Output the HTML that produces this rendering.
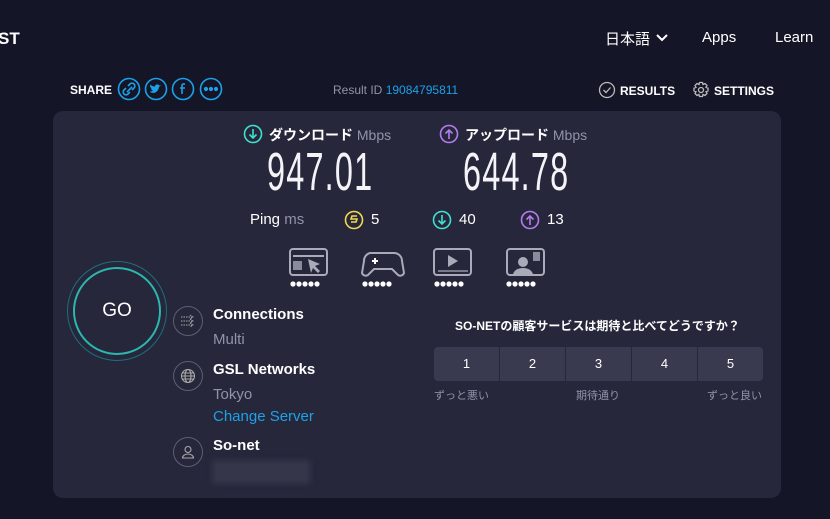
<!DOCTYPE html>
<html><head><meta charset="utf-8"><style>
*{margin:0;padding:0;box-sizing:border-box}
body{width:830px;height:519px;background:#141527;font-family:"Liberation Sans","Noto Sans CJK JP",sans-serif;color:#fff;position:relative;overflow:hidden}
.a{position:absolute;white-space:nowrap}
.card{position:absolute;left:53px;top:111px;width:728px;height:387px;background:#26273b;border-radius:10px}
.num{position:absolute;font-size:54px;font-weight:300;transform:scaleX(.6);transform-origin:left top;letter-spacing:2px;color:#f4f4f8;top:141px}
.gray{color:#9193a8}
.ico{position:absolute;border:1.5px solid #5d5f73;border-radius:50%;width:30px;height:30px}
.rate{position:absolute;top:347px;left:434px;width:329px;height:34px;display:flex;border-radius:4px;overflow:hidden}
.rate div{flex:1;background:#393a4f;margin-right:1px;text-align:center;line-height:34px;font-size:13px}
.rate div:last-child{margin-right:0}
</style></head><body>
<div class="a" style="left:-2px;top:29px;font-size:17px;font-weight:bold">ST</div>
<div class="a" style="left:605px;top:28px;font-size:15px">日本語</div>
<svg class="a" style="left:656px;top:34px" width="12" height="8"><path d="M1 1l5 5 5-5" stroke="#fff" stroke-width="2" fill="none"/></svg>
<div class="a" style="left:702px;top:29px;font-size:15px">Apps</div>
<div class="a" style="left:775px;top:29px;font-size:15px">Learn</div>
<div class="a" style="left:70px;top:83px;font-size:12px;font-weight:bold">SHARE</div>
<svg class="a" style="left:117px;top:77px" width="108" height="26" fill="none" stroke="#1da1e8" stroke-width="1.6">
<circle cx="12" cy="12" r="10.5"/><path d="M10 15l5-5M9 11l-2 2a2.5 2.5 0 0 0 4 4l2-2M15 13l2-2a2.5 2.5 0 0 0-4-4l-2 2"/>
<circle cx="39" cy="12" r="10.5"/><path d="M33 15c3 2 8 1 9-5l2-2-2 .5c-1-2-4-1-4 1-2 0-4-1-5-2 0 2 0 3 2 4h-1c0 1 1 2 2 2-1 1-2 1-3 1z" fill="#1da1e8" stroke="none"/>
<circle cx="66" cy="12" r="10.5"/><path d="M68 7h-1.5c-1 0-1.5.5-1.5 1.5V17M63 11h5"/>
<circle cx="94" cy="12" r="10.5"/><circle cx="89" cy="12" r="1.3" fill="#1da1e8"/><circle cx="94" cy="12" r="1.3" fill="#1da1e8"/><circle cx="99" cy="12" r="1.3" fill="#1da1e8"/>
</svg>
<div class="a" style="left:333px;top:83px;font-size:12px;color:#9193a8">Result ID <span style="color:#1da1e8">19084795811</span></div>
<svg class="a" style="left:598px;top:81px" width="18" height="18" fill="none" stroke="#bbb" stroke-width="1.3"><circle cx="9" cy="9" r="7.5"/><path d="M5.5 9l2.5 2.5 4.5-5"/></svg>
<div class="a" style="left:620px;top:84px;font-size:12px;font-weight:bold">RESULTS</div>
<svg class="a" style="left:692px;top:81px" width="18" height="18" fill="none" stroke="#bbb" stroke-width="1.3"><circle cx="9" cy="9" r="2.5"/><path d="M7.5 1.5h3l.5 2 2-1 2 2-1 2 2 .5v3l-2 .5 1 2-2 2-2-1-.5 2h-3l-.5-2-2 1-2-2 1-2-2-.5v-3l2-.5-1-2 2-2 2 1z"/></svg>
<div class="a" style="left:714px;top:84px;font-size:12px;font-weight:bold">SETTINGS</div>
<div class="card"></div>
<svg class="a" style="left:243px;top:124px" width="20" height="20" fill="none" stroke="#3fe0d0" stroke-width="1.6"><circle cx="10" cy="10" r="8.5"/><path d="M10 5v9M6.5 10.5L10 14l3.5-3.5"/></svg>
<div class="a" style="left:269px;top:125px;font-size:14px;font-weight:bold">ダウンロード <span class="gray" style="font-weight:normal">Mbps</span></div>
<div class="num" style="left:267px">947.01</div>
<svg class="a" style="left:439px;top:124px" width="20" height="20" fill="none" stroke="#b57cf0" stroke-width="1.6"><circle cx="10" cy="10" r="8.5"/><path d="M10 15V6M6.5 9.5L10 6l3.5 3.5"/></svg>
<div class="a" style="left:465px;top:125px;font-size:14px;font-weight:bold">アップロード <span class="gray" style="font-weight:normal">Mbps</span></div>
<div class="num" style="left:463px">644.78</div>
<div class="a" style="left:250px;top:211px;font-size:15px">Ping <span class="gray">ms</span></div>
<svg class="a" style="left:344px;top:210px" width="20" height="20" fill="none" stroke="#f0d850" stroke-width="1.6"><circle cx="10" cy="10" r="8.5"/><path d="M13 6H8l-1 3h6l-1 3H7"/></svg>
<div class="a" style="left:371px;top:211px;font-size:15px">5</div>
<svg class="a" style="left:432px;top:210px" width="20" height="20" fill="none" stroke="#3fe0d0" stroke-width="1.6"><circle cx="10" cy="10" r="8.5"/><path d="M10 5v9M6.5 10.5L10 14l3.5-3.5"/></svg>
<div class="a" style="left:459px;top:211px;font-size:15px">40</div>
<svg class="a" style="left:520px;top:210px" width="20" height="20" fill="none" stroke="#b57cf0" stroke-width="1.6"><circle cx="10" cy="10" r="8.5"/><path d="M10 15V6M6.5 9.5L10 6l3.5 3.5"/></svg>
<div class="a" style="left:547px;top:211px;font-size:15px">13</div>
<svg class="a" style="left:288px;top:247px" width="260" height="42" fill="none" stroke="#a9abb9" stroke-width="2">
<rect x="2" y="2" width="37" height="26" rx="3"/><path d="M5 9h31" stroke-width="2"/><rect x="5" y="14" width="9" height="9" fill="#8a8c9c" stroke="none"/><path d="M20 12l12 5-5 2 5 5-2 2-5-5-2 5z" fill="#a9abb9" stroke="none"/>
<path d="M82 6h24a8 8 0 0 1 8 8l2 12a4 4 0 0 1-6 2l-6-6H86l-6 6a4 4 0 0 1-6-2l2-12a8 8 0 0 1 6-8z"/><path d="M87 11v6M84 14h6" stroke="#fff"/>
<rect x="146" y="2" width="37" height="26" rx="3"/><path d="M160 8v12l10-6z" fill="#a9abb9" stroke="none"/><path d="M150 24h30" stroke-width="1.2"/>
<rect x="219" y="2" width="37" height="26" rx="3"/><circle cx="235" cy="15" r="5" fill="#a9abb9" stroke="none"/><path d="M225 28a10 7 0 0 1 20 0z" fill="#a9abb9" stroke="none"/><rect x="245" y="5" width="7" height="9" fill="#8a8c9c" stroke="none"/>
<g fill="#fff" stroke="none">
<circle cx="5" cy="37" r="2.6"/><circle cx="11" cy="37" r="2.6"/><circle cx="17" cy="37" r="2.6"/><circle cx="23" cy="37" r="2.6"/><circle cx="29" cy="37" r="2.6"/>
<circle cx="77" cy="37" r="2.6"/><circle cx="83" cy="37" r="2.6"/><circle cx="89" cy="37" r="2.6"/><circle cx="95" cy="37" r="2.6"/><circle cx="101" cy="37" r="2.6"/>
<circle cx="149" cy="37" r="2.6"/><circle cx="155" cy="37" r="2.6"/><circle cx="161" cy="37" r="2.6"/><circle cx="167" cy="37" r="2.6"/><circle cx="173" cy="37" r="2.6"/>
<circle cx="221" cy="37" r="2.6"/><circle cx="227" cy="37" r="2.6"/><circle cx="233" cy="37" r="2.6"/><circle cx="239" cy="37" r="2.6"/><circle cx="245" cy="37" r="2.6"/>
</g></svg>
<div class="a" style="left:67px;top:261px;width:100px;height:100px;border:1px solid #1f6d80;border-radius:50%"></div>
<div class="a" style="left:73px;top:267px;width:88px;height:88px;border:2px solid #2bb7b0;border-radius:50%;text-align:center;line-height:84px;font-size:19px">GO</div>
<div class="ico" style="left:173px;top:306px"></div>
<svg class="a" style="left:180px;top:314px" width="16" height="14" fill="none" stroke="#aaa" stroke-width="1"><path d="M1 3h12M10 1l3 2-3 2M1 7h12M10 5l3 2-3 2M1 11h12M10 9l3 2-3 2" stroke-dasharray="1.5 1"/></svg>
<div class="ico" style="left:173px;top:361px"></div>
<svg class="a" style="left:180px;top:368px" width="16" height="16" fill="none" stroke="#aaa" stroke-width="1.1"><circle cx="8" cy="8" r="6.5"/><ellipse cx="8" cy="8" rx="3" ry="6.5"/><path d="M1.5 8h13M2.5 5h11M2.5 11h11"/></svg>
<div class="ico" style="left:173px;top:437px"></div>
<svg class="a" style="left:180px;top:444px" width="16" height="16" fill="none" stroke="#aaa" stroke-width="1.1"><circle cx="8" cy="5.5" r="3"/><path d="M2.5 14a5.5 4 0 0 1 11 0z"/></svg>
<div class="a" style="left:213px;top:306px;font-size:15px;font-weight:bold">Connections</div>
<div class="a gray" style="left:213px;top:331px;font-size:15px">Multi</div>
<div class="a" style="left:213px;top:361px;font-size:15px;font-weight:bold">GSL Networks</div>
<div class="a gray" style="left:213px;top:386px;font-size:15px">Tokyo</div>
<div class="a" style="left:213px;top:408px;font-size:15px;color:#1da1e8">Change Server</div>
<div class="a" style="left:213px;top:437px;font-size:15px;font-weight:bold">So-net</div>
<div class="a" style="left:212px;top:460px;width:98px;height:24px;background:#35364a;filter:blur(3px)"></div>
<div class="a" style="left:455px;top:317px;font-size:12px;font-weight:bold">SO-NETの顧客サービスは期待と比べてどうですか？</div>
<div class="rate"><div>1</div><div>2</div><div>3</div><div>4</div><div>5</div></div>
<div class="a gray" style="left:434px;top:387px;font-size:11px">ずっと悪い</div>
<div class="a gray" style="left:576px;top:387px;font-size:11px">期待通り</div>
<div class="a gray" style="left:707px;top:387px;font-size:11px">ずっと良い</div>
</body></html>
